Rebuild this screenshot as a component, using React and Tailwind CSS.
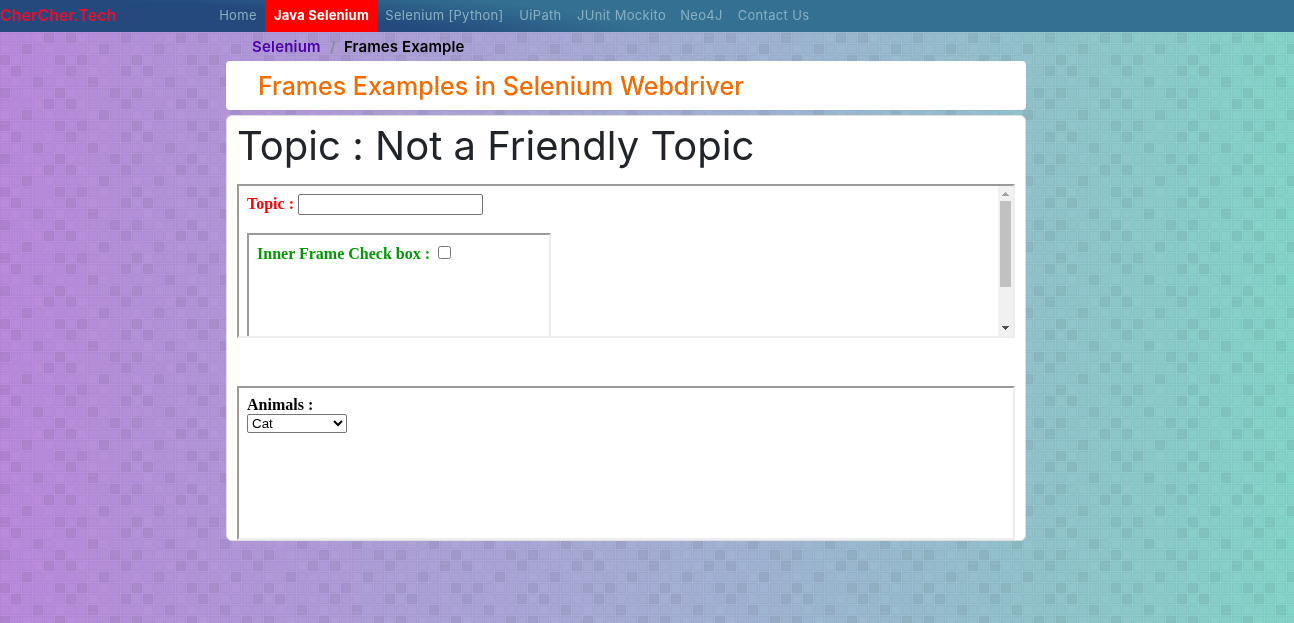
import React from "react";

const TILE = 11;
const DARK_CELLS = [
  [1, 6, 11],
  [3, 8],
  [0, 5, 10],
  [4, 6, 11],
  [2, 9],
  [0, 5, 7],
];

function Mosaic() {
  const cells = [];
  for (let r = 0; r < 6; r++) {
    for (let c = 0; c < 12; c++) {
      const dark = DARK_CELLS[r].includes(c);
      const light = (r * 5 + c * 7) % 4 === 0;
      cells.push(
        <rect
          key={`${r}-${c}`}
          x={c * TILE + 0.5}
          y={r * TILE + 0.5}
          width="9"
          height="9"
          fill="#000"
          fillOpacity={dark ? 0.07 : light ? 0.008 : 0.02}
          stroke="#000"
          strokeOpacity={dark ? 0.06 : 0.04}
        />
      );
    }
  }
  return (
    <svg className="fixed inset-0 -z-10 h-full w-full" aria-hidden="true">
      <defs>
        <linearGradient id="sky" x1="0" y1="0" x2="1" y2="0">
          <stop offset="0" stopColor="#bb8bde" />
          <stop offset="0.5" stopColor="#a7afd7" />
          <stop offset="0.8" stopColor="#93c5ce" />
          <stop offset="1" stopColor="#86d6cb" />
        </linearGradient>
        <pattern id="mosaic" width="132" height="66" patternUnits="userSpaceOnUse">
          {cells}
        </pattern>
      </defs>
      <rect width="100%" height="100%" fill="url(#sky)" />
      <rect width="100%" height="100%" fill="url(#mosaic)" />
    </svg>
  );
}

const LINKS = [
  ["Home", "w-[54px]"],
  ["Java Selenium", "w-[113px]"],
  ["Selenium [Python]", "w-[133px]"],
  ["UiPath", "w-[59px]"],
  ["JUnit Mockito", "w-[103px]"],
  ["Neo4J", "w-[57px]"],
  ["Contact Us", "w-[87px]"],
];

function NavBar() {
  return (
    <nav className="flex h-8 items-stretch bg-[radial-gradient(ellipse_620px_80px_at_0px_64px,#24497d_0%,#24497d_80%,#337091_112%)]">
      <a className="w-[211px] text-[16px] leading-[30px] font-semibold tracking-[0px] text-[#e8102f]">CherCher.Tech</a>
      {LINKS.map(([label, width]) => (
        <a
          key={label}
          className={
            label === "Java Selenium"
              ? `${width} bg-[#ff0000] text-center text-[13px] leading-[31px] font-bold tracking-[0.2px] whitespace-nowrap text-white`
              : `${width} text-center text-[13px] leading-[31px] tracking-[0.32px] whitespace-nowrap text-[#88afc4]`
          }
        >
          {label}
        </a>
      ))}
    </nav>
  );
}

function Scrollbar() {
  return (
    <div className="flex w-[15px] shrink-0 flex-col items-center bg-[#f1f1f1]">
      <svg className="h-[15px] w-[15px]" viewBox="0 0 15 15" shapeRendering="crispEdges">
        <path d="M7 6h1v1h1v1h1v1h1v1H4V9h1V8h1V7h1z" fill="#a3a3a3" />
      </svg>
      <div className="h-[86px] w-[11px] bg-[#c1c1c1]" />
      <svg className="mt-auto h-[15px] w-[15px]" viewBox="0 0 15 15" shapeRendering="crispEdges">
        <path d="M4 5h7v1h-1v1H9v1H8v1H7V8H6V7H5V6H4z" fill="#505050" />
      </svg>
    </div>
  );
}

const FRAME = "border-2 border-t-[#9a9a9a] border-l-[#9a9a9a] border-r-[#eeeeee] border-b-[#eeeeee]";

export default function App() {
  return (
    <div className="h-[623px] overflow-hidden font-['Inter',sans-serif]">
      <Mosaic />
      <NavBar />
      <div className="ml-[252px] flex h-[29px] text-[15px] leading-[30px] font-semibold text-black">
        <span className="w-[78px] tracking-[0.2px] text-[#4b00a8]">Selenium</span>
        <span className="w-[14px] font-semibold text-[#868e96]">/</span>
        <span className="tracking-[0.1px]">Frames Example</span>
      </div>
      <main className="ml-[226px] w-[800px]">
        <div className="h-[49px] rounded bg-white pl-8">
          <h2 className="text-[25px] leading-[50px] font-medium text-[#f36c00]">Frames Examples in Selenium Webdriver</h2>
        </div>
        <section className="mt-[5px] h-[426px] rounded-md border border-[#dfdfdf] bg-white px-[10px]">
          <h1 className="h-[68px] text-[40px] leading-[59px] font-[380] tracking-[0.03px] text-[#212529]">
            Topic : Not a Friendly Topic
          </h1>
          <div className={`flex h-[154px] w-[778px] overflow-hidden ${FRAME}`}>
            <div className="flex-1 overflow-hidden p-2 font-['Liberation_Serif',serif] text-[16px] font-bold">
              <label className="flex h-[21px] items-start text-[#ff0000]">
                <span className="w-[51px] leading-[19px]">Topic :</span>
                <input className="h-[21px] w-[185px] rounded-[2px] border border-[#767676] bg-white" />
              </label>
              <div className={`mt-[18px] h-[154px] w-[304px] p-2 ${FRAME}`}>
                <label className="flex h-[21px] items-center text-[#009900]">
                  <span className="w-[181px] leading-[19px]">Inner Frame Check box :</span>
                  <input type="checkbox" className="mb-[2px] h-[13px] w-[13px]" />
                </label>
              </div>
            </div>
            <Scrollbar />
          </div>
          <div className={`mt-12 h-[154px] w-[778px] p-2 font-['Liberation_Serif',serif] ${FRAME}`}>
            <div className="text-[16px] leading-[18px] font-bold text-black">Animals :</div>
            <div className="flex h-[19px] w-[100px] items-center justify-between rounded-[2px] border border-[#767676] bg-white pr-[3px] pl-1 font-['Liberation_Sans',sans-serif] text-[13.333px] text-black">
              Cat
              <svg className="h-[7px] w-[10px]" viewBox="0 0 10 7">
                <path d="M1 1l4 4 4-4" fill="none" stroke="#000" strokeWidth="2" />
              </svg>
            </div>
          </div>
        </section>
      </main>
    </div>
  );
}
